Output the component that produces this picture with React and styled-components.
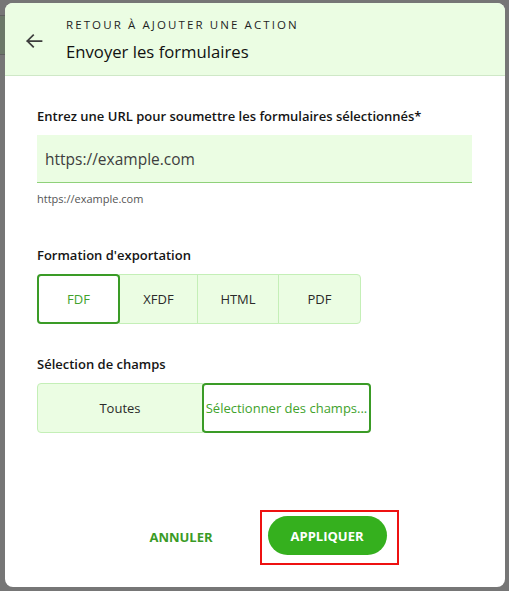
import React, { useState } from "react";
import styled, { createGlobalStyle } from "styled-components";

// ---- Component ----

const formats = [
	{ name: "FDF", width: 83 },
	{ name: "XFDF", width: 79 },
	{ name: "HTML", width: 82 },
	{ name: "PDF", width: 83 },
];
const fieldModes = [
	{ name: "Toutes", width: 166 },
	{ name: "Sélectionner des champs...", width: 169 },
];

const App = () => {
	const [format, setFormat] = useState("FDF");
	const [fields, setFields] = useState(fieldModes[1].name);

	return (
		<>
			<GlobalStyle />
			<Backdrop>
				<BackStrip />
				<Dialog>
					<Header>
						<BackButton aria-label="Retour">
							<svg width="20" height="20" viewBox="0 0 24 24" fill="none">
								<path
									d="M21 12H4M11 5l-7 7 7 7"
									stroke="#3d3d3d"
									strokeWidth="2.1"
									strokeLinecap="square"
								/>
							</svg>
						</BackButton>
						<HeaderText>
							<Overline>Retour à ajouter une action</Overline>
							<Title>Envoyer les formulaires</Title>
						</HeaderText>
					</Header>

					<Body>
						<Section>
							<Label>Entrez une URL pour soumettre les formulaires sélectionnés*</Label>
							<UrlInput defaultValue="https://example.com" />
							<Helper>https://example.com</Helper>
						</Section>

						<Section $top={40}>
							<Label>Formation d'exportation</Label>
							<Segmented>
								{formats.map((f) => (
									<Segment
										key={f.name}
										$width={f.width}
										$active={format === f.name}
										onClick={() => setFormat(f.name)}
									>
										{f.name}
									</Segment>
								))}
							</Segmented>
						</Section>

						<Section $top={31}>
							<Label>Sélection de champs</Label>
							<Segmented>
								{fieldModes.map((m) => (
									<Segment
										key={m.name}
										$width={m.width}
										$active={fields === m.name}
										onClick={() => setFields(m.name)}
									>
										{m.name}
									</Segment>
								))}
							</Segmented>
						</Section>
					</Body>

					<Footer>
						<CancelButton>Annuler</CancelButton>
						<Highlight>
							<ApplyButton>Appliquer</ApplyButton>
						</Highlight>
					</Footer>
				</Dialog>
			</Backdrop>
		</>
	);
};

export default App;

// ---- Style ----

const GlobalStyle = createGlobalStyle`
	html, body {
		margin: 0;
		padding: 0;
		background: #767676;
	}
	* {
		box-sizing: border-box;
	}
`;

const Backdrop = styled.div`
	position: relative;
	width: 509px;
	height: 591px;
	background: #767676;
	padding: 3px 4px 4px 5px;
	font-family: "Open Sans", "Noto Sans", sans-serif;
	overflow: hidden;
`;

const BackStrip = styled.div`
	position: absolute;
	left: 0;
	top: 15px;
	width: 6px;
	height: 40px;
	background: #6b7868;
	border-top: 1px solid #5f5f5f;
	border-bottom: 1px solid #5f5f5f;
`;

const Dialog = styled.div`
	position: relative;
	width: 500px;
	height: 584px;
	background: #ffffff;
	border-radius: 8px;
	overflow: hidden;
	display: flex;
	flex-direction: column;
`;

const Header = styled.div`
	height: 73px;
	flex-shrink: 0;
	background: #ebfde3;
	border-bottom: 1px solid #cfe8c7;
	display: flex;
	align-items: center;
	padding-left: 18px;
`;

const BackButton = styled.button`
	width: 22px;
	height: 22px;
	padding: 0;
	border: none;
	background: none;
	display: flex;
	align-items: center;
	justify-content: center;
	margin-right: 21px;
	margin-top: 3px;
	cursor: pointer;
`;

const HeaderText = styled.div`
	display: flex;
	flex-direction: column;
	padding-top: 1px;
`;

const Overline = styled.div`
	font-size: 11.5px;
	letter-spacing: 2.1px;
	text-transform: uppercase;
	color: #1f1f1f;
	line-height: 16px;
`;

const Title = styled.div`
	font-size: 16.7px;
	color: #111111;
	line-height: 22px;
	margin-top: 8px;
`;

const Body = styled.div`
	flex: 1;
	padding: 31px 32px 0 32px;
`;

const Section = styled.div`
	margin-top: ${(p) => p.$top || 0}px;
`;

const Label = styled.div`
	font-size: 13px;
	font-weight: 600;
	color: #151515;
	line-height: 18px;
	margin-bottom: 10px;
`;

const UrlInput = styled.input`
	display: block;
	width: 435px;
	height: 48px;
	border: none;
	border-bottom: 1px solid #8fd17a;
	background: #ebfde3;
	padding: 0 8px;
	font-family: inherit;
	font-size: 15.5px;
	color: #3e3e3e;
	outline: none;
`;

const Helper = styled.div`
	font-size: 11px;
	color: #555555;
	margin-top: 9px;
	line-height: 14px;
`;

const Segmented = styled.div`
	display: flex;
`;

const Segment = styled.button`
	position: relative;
	z-index: ${(p) => (p.$active ? 1 : 0)};
	width: ${(p) => p.$width}px;
	height: 50px;
	margin-left: -1px;
	font-family: inherit;
	font-size: 13px;
	white-space: nowrap;
	padding: 0;
	cursor: pointer;
	border-radius: ${(p) => (p.$active ? "4px" : "0")};
	background: ${(p) => (p.$active ? "#ffffff" : "#ebfde3")};
	border: ${(p) => (p.$active ? "2px solid #3a9b26" : "1px solid #c4efb7")};
	color: ${(p) => (p.$active ? "#41a22c" : "#2a2a2a")};

	&:first-child {
		margin-left: 0;
		border-top-left-radius: 4px;
		border-bottom-left-radius: 4px;
	}

	&:last-child {
		border-top-right-radius: 4px;
		border-bottom-right-radius: 4px;
	}
`;

const Footer = styled.div`
	height: 100px;
	flex-shrink: 0;
	display: flex;
	align-items: flex-start;
	justify-content: center;
	padding-top: 23px;
	padding-left: 38px;
	gap: 47px;
`;

const CancelButton = styled.button`
	border: none;
	background: none;
	padding: 0;
	margin-top: 18px;
	font-family: inherit;
	font-size: 13px;
	font-weight: 700;
	text-transform: uppercase;
	color: #3a9b26;
	cursor: pointer;
`;

const Highlight = styled.div`
	border: 2px solid #ee1111;
	padding: 4px 10px 8px 6px;
`;

const ApplyButton = styled.button`
	width: 119px;
	height: 39px;
	border: none;
	border-radius: 20px;
	background: #35b01e;
	color: #ffffff;
	font-family: inherit;
	font-size: 13px;
	font-weight: 700;
	text-transform: uppercase;
	cursor: pointer;
`;
